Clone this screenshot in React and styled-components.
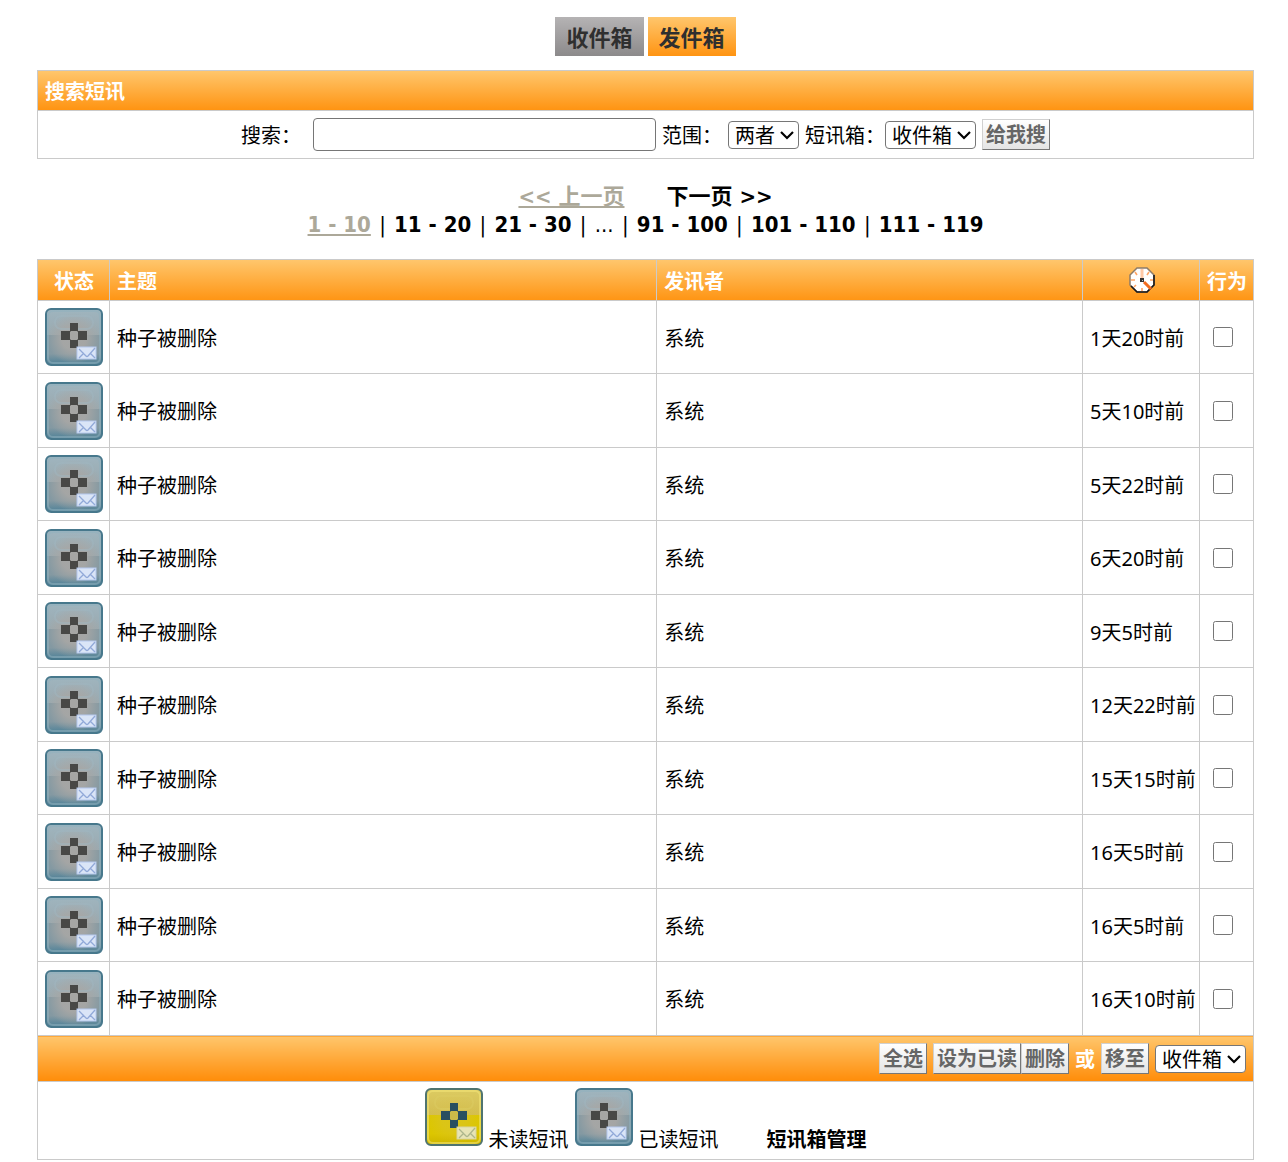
import React, { useId, useState } from "react";
import styled, { createGlobalStyle, css } from "styled-components";

const orange = "linear-gradient(#ffc66c, #ff9412)";
const line = "1px solid #cacaca";

const GlobalStyle = createGlobalStyle`
  * { box-sizing: border-box; }
  body {
    margin: 0;
    background: #fff;
    color: #000;
    font: 20px/28px "Noto Sans", "Noto Sans CJK SC", sans-serif;
  }
  button, input, select { font: inherit; margin: 0; }
`;

const Page = styled.main`
  padding: 17px 34px 2px 37px;
`;

const Tabs = styled.nav`
  display: flex;
  justify-content: center;
  gap: 4px;
  margin-bottom: 14px;
`;

const Tab = styled.a`
  padding: 1px 11px 0;
  font-size: 22px;
  font-weight: bold;
  line-height: 38px;
  color: #2f2f2f;
  text-decoration: none;
  background: ${(p) => (p.$active ? orange : "linear-gradient(#b5b3b4, #8c8a8b)")};
`;

const SearchPanel = styled.form`
  border: ${line};
`;

const PanelTitle = styled.h1`
  margin: 0;
  padding: 3px 7px 0;
  border-bottom: ${line};
  background: ${orange};
  color: #fff;
  font-size: 20px;
  line-height: 36px;
`;

const SearchFields = styled.div`
  display: flex;
  align-items: center;
  justify-content: center;
  gap: 6px;
  height: 47px;
`;

const Field = styled.span`
  display: flex;
  align-items: center;
  gap: ${(p) => p.$gap || 0}px;
  label { padding-top: 3px; }
`;

const TextBox = styled.input`
  width: 343px;
  height: 33px;
  padding: 0 4px;
  border: 1px solid #767676;
  border-radius: 4px;
`;

const SelectBox = styled.span`
  position: relative;
  display: inline-flex;
  svg {
    position: absolute;
    right: 4px;
    top: 8px;
    pointer-events: none;
  }
`;

const NativeSelect = styled.select`
  appearance: none;
  height: 28px;
  padding: 1px 23px 0 6px;
  border: 1px solid #767676;
  border-radius: 4px;
  background: #fff;
  color: #000;
  line-height: 25px;
`;

const PushButton = styled.button`
  height: 31px;
  padding: 1px 3px 0;
  border: 1px solid;
  border-color: #d0d0d0 #777 #777 #d0d0d0;
  border-radius: 0;
  background: linear-gradient(#fff, #e4e4e4);
  color: #666;
  font-weight: bold;
  line-height: 28px;
`;

const Pager = styled.nav`
  margin: 24px 0 20px;
  font: 22px/28px "DejaVu Sans Condensed", "Noto Sans CJK SC", sans-serif;
  text-align: center;
`;

const PagerSteps = styled.div`
  display: flex;
  justify-content: center;
  gap: 42px;
`;

const Separator = styled.span`
  margin: 0 2px;
`;

const pagerText = css`
  font-weight: bold;
  color: #000;
  text-decoration: none;
`;

const PageLink = styled.a`
  ${pagerText}
`;

const PageCurrent = styled.span`
  ${pagerText}
  color: #aca899;
  text-decoration: underline;
`;

const Messages = styled.table`
  width: 100%;
  table-layout: fixed;
  border-collapse: collapse;
`;

const Column = styled.col`
  width: ${(p) => p.$width};
`;

const HeadRow = styled.tr`
  height: 41px;
  background: ${orange};
  color: #fff;
`;

const Head = styled.th`
  padding: ${(p) => (p.$icon ? 0 : 3)}px 6px 0 7px;
  border: ${line};
  text-align: ${(p) => (p.$center ? "center" : "left")};
  white-space: nowrap;
  svg { display: block; margin: 0 auto; }
`;

const Row = styled.tr`
  height: 73px;
  &:nth-child(even) { height: 74px; }
`;

const Cell = styled.td`
  padding: 3px 0 0 7px;
  border: ${line};
  white-space: nowrap;
`;

const IconCell = styled(Cell)`
  padding: 0 0 0 ${(p) => p.$inset}px;
  svg, input { display: block; }
`;

const Check = styled.input`
  width: 20px;
  height: 20px;
`;

const ActionCell = styled.td`
  height: 46px;
  padding: 0 7px;
  border: ${line};
  background: linear-gradient(#ffc66c, #ff8c08);
`;

const Actions = styled.div`
  display: flex;
  align-items: center;
  justify-content: flex-end;
  gap: 6px;
`;

const ButtonPair = styled.span`
  display: flex;
`;

const Or = styled.strong`
  padding-top: 3px;
  color: #fff;
`;

const LegendCell = styled.td`
  height: 78px;
  padding: 0 7px;
  border: ${line};
`;

const Legend = styled.div`
  display: flex;
  align-items: flex-end;
  justify-content: center;
  gap: 6px;
  svg { margin-bottom: 8px; }
`;

const ManageLink = styled.a`
  margin-left: 42px;
  color: #000;
  font-weight: bold;
  text-decoration: none;
`;

function StatusIcon({ unread, label }) {
  const id = useId();
  const c = unread
    ? { edge: "#4f7470", top: "#dccb62", upper: "#d3bd50", lower: "#dcc600", bottom: "#cdb400", glow: "#d8c24a", rim: "#f4e678", cross: "#294f60", core: "#cbbb49", mail: "#e7e4b6", fold: "#adb68c", line: "#d8d4a0" }
    : { edge: "#47788c", top: "#9fb5bf", upper: "#9aa9af", lower: "#8499a2", bottom: "#4c8097", glow: "#a8a7a5", rim: "#8fb0bd", cross: "#484846", core: "#a6a6a4", mail: "#dae5f7", fold: "#91a9d8", line: "#b4c8ed" };
  return (
    <svg width="58" height="58" viewBox="0 0 58 58" role="img" aria-label={label}>
      <defs>
        <linearGradient id={`${id}b`} x2="0" y2="1">
          <stop offset="0" stopColor={c.top} />
          <stop offset="0.47" stopColor={c.upper} />
          <stop offset="0.47" stopColor={c.lower} />
          <stop offset="0.8" stopColor={c.lower} />
          <stop offset="1" stopColor={c.bottom} />
        </linearGradient>
        <radialGradient id={`${id}g`} cx="50%" cy="52%" r="50%">
          <stop offset="0.45" stopColor={c.glow} />
          <stop offset="1" stopColor={c.glow} stopOpacity="0" />
        </radialGradient>
      </defs>
      <rect x="1" y="1" width="56" height="56" rx="5" fill={`url(#${id}b)`} stroke={c.edge} strokeWidth="2" />
      <rect x="2" y="4" width="54" height="51" fill={`url(#${id}g)`} opacity={unread ? 0.3 : 0.9} />
      <rect x="3" y="3" width="52" height="52" rx="5" fill="none" stroke={c.rim} strokeWidth="2" opacity="0.55" />
      <rect x="10" y="8" width="38" height="13" rx="6" fill="none" stroke={c.top} strokeWidth="2" opacity="0.5" />
      <path fill={c.cross} d="M25 15h8v8h9v9h-9v8h-8v-8h-9v-9h9Z" />
      <path fill={c.core} d="M26 23h6l1 1v7l-1 1h-6l-1-1v-7Z" />
      <rect x="32" y="39" width="19" height="12" fill={c.mail} stroke={c.line} />
      <path d="m34 41 7 7q1 1 2 0l7-8M34 50l5-5M50 50l-5-5" fill="none" stroke={c.fold} strokeWidth="1.3" />
    </svg>
  );
}

function ClockIcon() {
  return (
    <svg width="26" height="26" viewBox="0 0 26 26" role="img" aria-label="时间">
      <path d="M8 1h10l7 7v10l-7 7H8l-7-7V8Z" fill="#fff" stroke="#8d7b68" strokeWidth="1.5" />
      <path d="M25 8v10l-7 7H8l-6-6" fill="none" stroke="#181818" strokeWidth="1.6" />
      <path d="M13 2v9" stroke="#ffc9a6" strokeWidth="3" />
      <path d="m6 5 2 3m12-3-2 3M2 13h4m18 0h-3M5 20l2-2m6 6v-3" stroke="#ffa566" strokeWidth="1.6" />
      <path d="m15 15 7 7" stroke="#f26a1d" strokeWidth="3" />
      <rect x="11" y="11" width="4" height="4" fill="#333" />
      <rect x="13" y="13" width="1" height="1" fill="#bbb" />
    </svg>
  );
}

function Select({ options, ...rest }) {
  return (
    <SelectBox>
      <NativeSelect {...rest}>
        {options.map((o) => <option key={o}>{o}</option>)}
      </NativeSelect>
      <svg width="16" height="12" viewBox="0 0 16 12" aria-hidden="true">
        <path d="m2 3 6 6 6-6" fill="none" stroke="#000" strokeWidth="2.2" />
      </svg>
    </SelectBox>
  );
}

const times = ["1天20时前", "5天10时前", "5天22时前", "6天20时前", "9天5时前", "12天22时前", "15天15时前", "16天5时前", "16天5时前", "16天10时前"];
const ranges = ["11 - 20", "21 - 30", "...", "91 - 100", "101 - 110", "111 - 119"];

export default function App() {
  const [checked, setChecked] = useState(() => times.map(() => false));
  const toggle = (index) => setChecked((all) => all.map((v, i) => (i === index ? !v : v)));

  return (
    <>
      <GlobalStyle />
      <Page lang="zh-CN">
        <Tabs>
          <Tab href="#inbox">收件箱</Tab>
          <Tab href="#outbox" $active>发件箱</Tab>
        </Tabs>

        <SearchPanel onSubmit={(e) => e.preventDefault()}>
          <PanelTitle>搜索短讯</PanelTitle>
          <SearchFields>
            <Field $gap={12}>
              <label htmlFor="keyword">搜索：</label>
              <TextBox id="keyword" type="text" />
            </Field>
            <Field $gap={6}>
              <label htmlFor="scope">范围：</label>
              <Select id="scope" options={["两者", "标题", "内容"]} />
            </Field>
            <Field>
              <label htmlFor="box">短讯箱：</label>
              <Select id="box" options={["收件箱", "发件箱"]} />
            </Field>
            <PushButton type="submit">给我搜</PushButton>
          </SearchFields>
        </SearchPanel>

        <Pager>
          <PagerSteps>
            <PageCurrent>&lt;&lt; 上一页</PageCurrent>
            <PageLink href="#next">下一页 &gt;&gt;</PageLink>
          </PagerSteps>
          <div>
            <PageCurrent>1 - 10</PageCurrent>
            {ranges.map((r) => (
              <React.Fragment key={r}>
                <Separator> | </Separator>
                {r === "..." ? r : <PageLink href="#page">{r}</PageLink>}
              </React.Fragment>
            ))}
          </div>
        </Pager>

        <Messages>
          <colgroup>
            <Column $width="72px" />
            <Column $width="45%" />
            <Column />
            <Column $width="117px" />
            <Column $width="54px" />
          </colgroup>
          <thead>
            <HeadRow>
              <Head $center>状态</Head>
              <Head>主题</Head>
              <Head>发讯者</Head>
              <Head $center $icon><ClockIcon /></Head>
              <Head $center>行为</Head>
            </HeadRow>
          </thead>
          <tbody>
            {times.map((time, i) => (
              <Row key={i}>
                <IconCell $inset={7}><StatusIcon label="已读" /></IconCell>
                <Cell>种子被删除</Cell>
                <Cell>系统</Cell>
                <Cell>{time}</Cell>
                <IconCell $inset={13}>
                  <Check type="checkbox" aria-label="选择短讯" checked={checked[i]} onChange={() => toggle(i)} />
                </IconCell>
              </Row>
            ))}
          </tbody>
          <tfoot>
            <tr>
              <ActionCell colSpan={5}>
                <Actions>
                  <PushButton type="button" onClick={() => setChecked(times.map(() => true))}>全选</PushButton>
                  <ButtonPair>
                    <PushButton type="button">设为已读</PushButton>
                    <PushButton type="button">删除</PushButton>
                  </ButtonPair>
                  <Or>或</Or>
                  <PushButton type="button">移至</PushButton>
                  <Select aria-label="移至" options={["收件箱", "发件箱"]} />
                </Actions>
              </ActionCell>
            </tr>
            <tr>
              <LegendCell colSpan={5}>
                <Legend>
                  <StatusIcon unread label="未读" />
                  <span>未读短讯</span>
                  <StatusIcon label="已读" />
                  <span>已读短讯</span>
                  <ManageLink href="#manage">短讯箱管理</ManageLink>
                </Legend>
              </LegendCell>
            </tr>
          </tfoot>
        </Messages>
      </Page>
    </>
  );
}
